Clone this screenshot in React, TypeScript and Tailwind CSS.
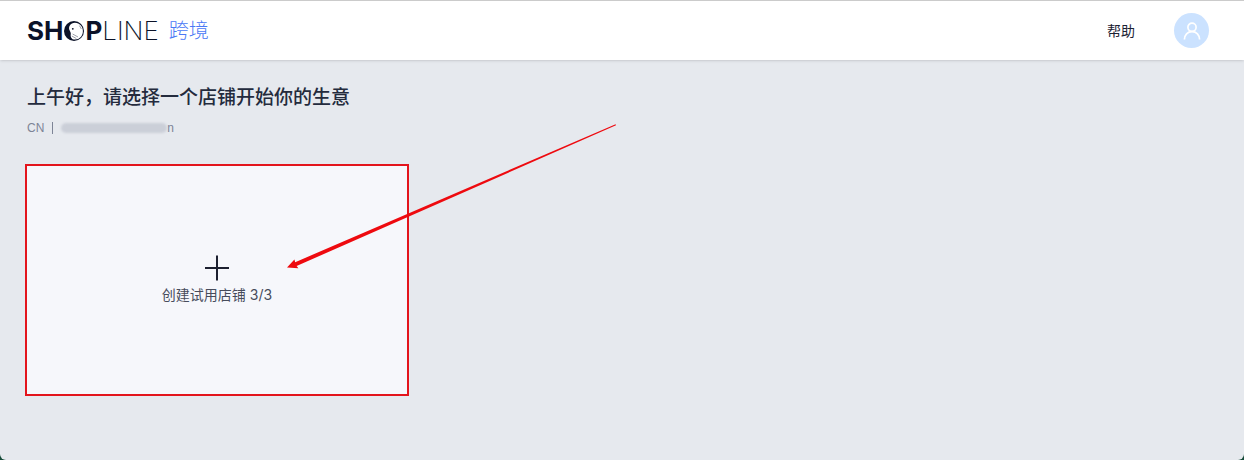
import React from "react";

function SealMark() {
	return (
		<svg viewBox="0 0 20 20" className="mx-px h-5 w-5" aria-hidden="true">
			<circle cx="10" cy="10" r="10" fill="#0b1228" />
			<path
				d="M8 2.4C11.4 1 15.8 2.4 17.8 5.8C19.6 9.2 19.2 13.4 16.8 16.1C14.6 18.5 11.4 19.1 8.6 18.2C6.6 16.8 6.4 15 6.8 12.8C7 10.6 5 9.6 5 7.2C5 5 6.2 3.2 8 2.4Z"
				fill="#fff"
			/>
			<circle cx="8.8" cy="7.8" r="0.9" fill="#0b1228" />
			<path
				d="M15.4 4.6L17.4 8M8.6 13L14 16M7.8 15L12.4 17.6"
				fill="none"
				stroke="#0b1228"
				strokeWidth="0.4"
			/>
		</svg>
	);
}

function Logo() {
	return (
		<a href="#" className="flex items-center gap-2.5">
			<span className="flex items-center font-[Inter,sans-serif] text-[26px] leading-8 text-[#0b1228]">
				<span className="font-bold">SH</span>
				<SealMark />
				<span className="font-bold">P</span>
				<span className="font-extralight">LINE</span>
			</span>
			<span className="text-xl font-light text-[#4a78f5]">跨境</span>
		</a>
	);
}

function Header() {
	return (
		<header className="flex h-[60px] items-center justify-between border-t border-[#cbcbcb] bg-white pr-[35px] pl-[27px] shadow-sm">
			<Logo />
			<div className="flex items-center gap-[39px]">
				<button type="button" className="text-sm text-[#1d2233]">
					帮助
				</button>
				<button
					type="button"
					aria-label="账户"
					className="flex h-[35px] w-[35px] items-center justify-center rounded-full bg-[#cbe2ff]"
				>
					<svg
						viewBox="0 0 18 18"
						className="h-[18px] w-[18px]"
						fill="none"
						stroke="#fff"
						strokeWidth="1.7"
					>
						<circle cx="9" cy="5.2" r="4.1" />
						<path d="M1.4 17.6C1.4 12.8 4.6 9.6 9 9.6C13.4 9.6 16.6 12.8 16.6 17.6" />
					</svg>
				</button>
			</div>
		</header>
	);
}

function Account() {
	return (
		<p className="mt-2 flex items-center text-xs leading-4 text-[#7d8496]">
			<span>CN</span>
			<span className="mx-2 h-3 w-px bg-[#7d8496]" />
			<span className="h-2.5 w-[106px] rounded-full bg-[#cbcfd8] blur-[1px]" />
			<span>n</span>
		</p>
	);
}

function CreateStore() {
	return (
		<button
			type="button"
			className="mt-7 -ml-0.5 flex h-[232px] w-96 flex-col items-center justify-center gap-1 border-2 border-[#e3141c] bg-[#f6f7fb] font-[Inter,'Noto_Sans_CJK_SC',sans-serif] text-sm text-[#474c5b]"
		>
			<svg
				viewBox="0 0 26 26"
				className="h-[26px] w-[26px]"
				stroke="#1d2030"
				strokeWidth="2"
				aria-hidden="true"
			>
				<path d="M13 0.5V25.5M1 13H25" />
			</svg>
			<span>创建试用店铺 3/3</span>
		</button>
	);
}

function Arrow() {
	return (
		<svg
			viewBox="0 0 330 146"
			className="pointer-events-none absolute top-[124px] left-[287px] h-[146px] w-[330px]"
			fill="#ee0a0f"
			aria-hidden="true"
		>
			<path d="M0 143.5L7.4 135.4L8.2 138.2L328.6 0.2L329 1.2L9.6 142L11.4 144.2Z" />
		</svg>
	);
}

export default function App() {
	return (
		<div className="min-h-screen bg-[#174c3a] font-['Liberation_Sans','Noto_Sans_CJK_SC',sans-serif]">
			<div className="relative min-h-screen overflow-hidden rounded-b-md bg-[#e6e9ee]">
				<Header />
				<main className="px-[27px] pt-6">
					<h1 className="text-[19px] leading-7 font-medium text-[#242b3d]">
						上午好，请选择一个店铺开始你的生意
					</h1>
					<Account />
					<CreateStore />
				</main>
				<Arrow />
			</div>
		</div>
	);
}
